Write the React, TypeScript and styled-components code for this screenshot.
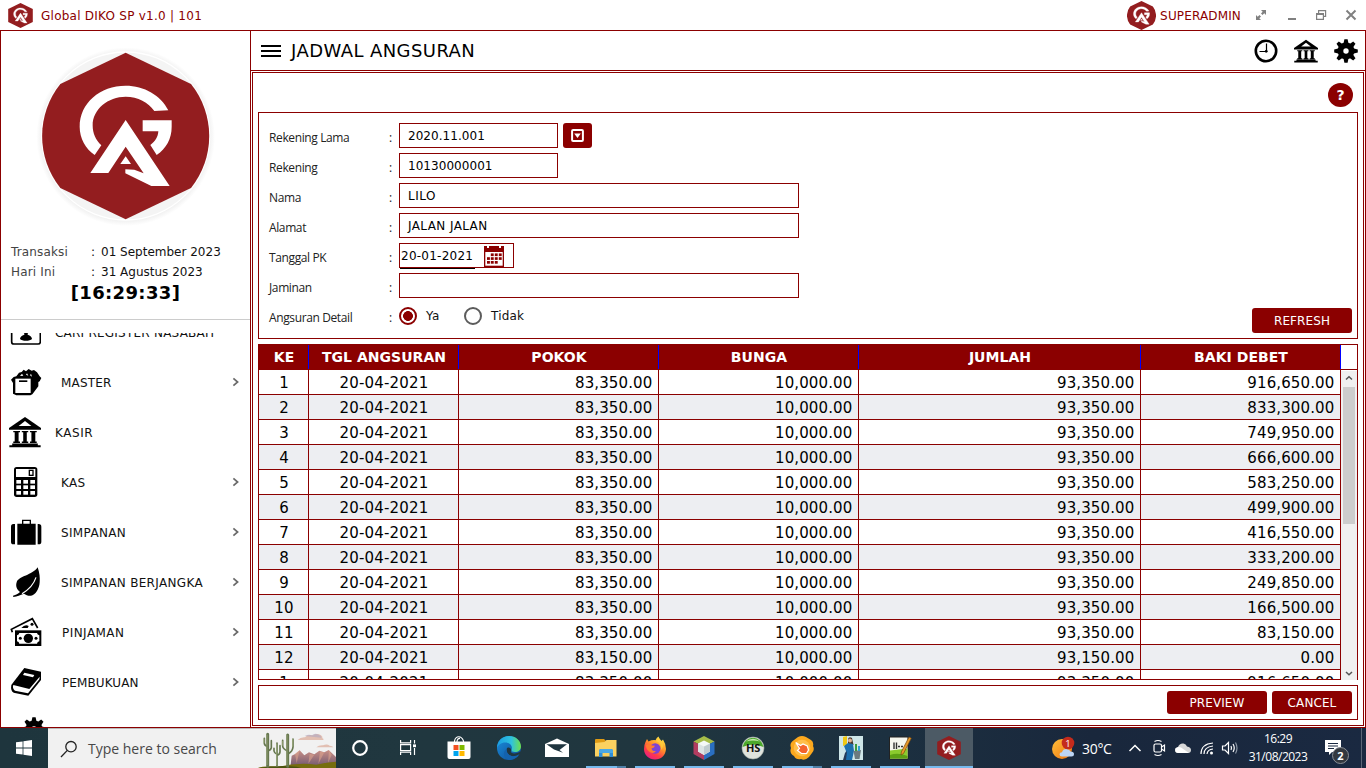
import React from "react";
import styled, { createGlobalStyle, css } from "styled-components";

const RED = "#8b0000";
const LOGO = "#931d1f";
const VERDANA = `Verdana, "DejaVu Sans", sans-serif`;
const SEGOE = `"Segoe UI", "Open Sans", "Noto Sans", sans-serif`;

const Global = createGlobalStyle`
  * { box-sizing: border-box; }
  body { margin: 0; background: #fff; overflow: hidden; font: 12px ${VERDANA}; color: #111; }
  svg { display: block; flex: none; }
`;

const Screen = styled.div`
  width: 1366px;
  height: 768px;
  display: flex;
  flex-direction: column;
`;

/* ---------- window ---------- */

const TitleBar = styled.header`
  height: 30px;
  flex: none;
  display: flex;
  align-items: center;
  padding: 0 9px 0 8px;
  color: ${RED};
`;
const AppName = styled.span`
  margin-left: 8px;
  padding-top: 2px;
  letter-spacing: 0.25px;
`;
const UserName = styled.span`
  margin: 0 14px 0 4px;
  padding-top: 2px;
  letter-spacing: 0.15px;
`;
const Grow = styled.div`
  flex: 1;
`;
const WindowButtons = styled.div`
  display: flex;
  gap: 18px;
  align-items: center;
`;
const Main = styled.div`
  height: 698px;
  flex: none;
  display: flex;
  border: 1px solid ${RED};
`;
const Sidebar = styled.aside`
  width: 250px;
  flex: none;
  border-right: 1px solid ${RED};
  display: flex;
  flex-direction: column;
`;
const LogoArea = styled.div`
  height: 211px;
  display: flex;
  justify-content: center;
  padding-top: 15px;
`;
const InfoRow = styled.div`
  display: grid;
  grid-template-columns: 80px 10px 1fr;
  height: 20px;
  line-height: 20px;
  padding-left: 10px;
  color: #111;
  span:first-child { color: #444; letter-spacing: 0.15px; }
`;
const Clock = styled.div`
  height: 37px;
  line-height: 21px;
  font-size: 18px;
  font-weight: bold;
  letter-spacing: 0.35px;
  text-align: center;
  color: #000;
`;
const Menu = styled.nav`
  margin-top: 13px;
  flex: 1;
  min-height: 0;
  overflow: hidden;
`;
const Divider = styled.div`
  height: 1px;
  background: #ccc;
`;
const MenuItem = styled.div<{ $half?: boolean; $indent: number }>`
  height: 50px;
  display: flex;
  align-items: center;
  padding: 0 9px 0 8px;
  ${(p) => p.$half && css`margin-top: -26px;`}
  svg:first-child { margin-right: ${(p) => p.$indent}px; }
`;
const MenuLabel = styled.span<{ $track?: number }>`
  flex: 1;
  padding-top: 2px;
  white-space: nowrap;
  letter-spacing: ${(p) => p.$track ?? 0.2}px;
`;
const Content = styled.div`
  flex: 1;
  display: flex;
  flex-direction: column;
`;
const PageHeader = styled.div`
  height: 40px;
  flex: none;
  border-bottom: 1px solid ${RED};
  display: flex;
  align-items: center;
  padding: 1px 7.5px 0 10px;
  gap: 16px;
`;
const Burger = styled.div`
  width: 20px;
  height: 12px;
  margin-bottom: 1px;
  border-top: 2px solid #000;
  border-bottom: 2px solid #000;
  display: flex;
  align-items: center;
  &::after { content: ""; height: 2px; width: 20px; background: #000; }
`;
const PageTitle = styled.h1`
  margin: 0 0 1px -6px;
  font-size: 18px;
  font-weight: normal;
  letter-spacing: 0.42px;
  color: #000;
`;
const Panel = styled.div`
  flex: 1;
  margin: 1px;
  border: 1px solid ${RED};
  padding: 0 5px 5px;
  display: flex;
  flex-direction: column;
`;
const HelpRow = styled.div`
  height: 39px;
  flex: none;
  display: flex;
  justify-content: flex-end;
  padding: 10px 5px 0 0;
`;
const Help = styled.div`
  width: 25px;
  height: 24px;
  border-radius: 50%;
  background: ${RED};
  color: #fff;
  font: bold 14px/24px "DejaVu Sans", sans-serif;
  text-align: center;
`;

/* ---------- form ---------- */

const Form = styled.section`
  height: 227px;
  flex: none;
  border: 1px solid ${RED};
  padding: 10px 5px 0 10px;
  display: flex;
  justify-content: space-between;
`;
const Fields = styled.div`
  display: flex;
  flex-direction: column;
  gap: 5px;
`;
const Field = styled.div`
  height: 25px;
  display: flex;
  align-items: center;
`;
const Label = styled.label`
  width: 120px;
  padding-top: 3px;
  font: 12px ${SEGOE};
  letter-spacing: -0.38px;
  color: #222;
`;
const Colon = styled.span`
  width: 10px;
  padding-top: 3px;
  font: 12px ${SEGOE};
  color: #222;
`;
const Input = styled.div<{ $w: number; $date?: boolean; $track?: number }>`
  width: ${(p) => p.$w}px;
  height: 25px;
  border: 1px solid ${RED};
  padding: 0 9px 0 ${(p) => (p.$date ? 1 : 8)}px;
  display: flex;
  align-items: center;
  justify-content: space-between;
  letter-spacing: ${(p) => p.$track ?? 0.05}px;
  color: #000;
  position: relative;
  ${(p) => p.$date && css`
    letter-spacing: 0.25px;
    &::after {
      content: "";
      position: absolute;
      left: 0;
      bottom: -2px;
      width: 75px;
      height: 1px;
      background: #000;
    }
  `}
`;
const Button = styled.button<{ $w: number; $h: number }>`
  width: ${(p) => p.$w}px;
  height: ${(p) => p.$h}px;
  padding: 0;
  border: 0;
  border-radius: 3px;
  background: ${RED};
  color: #fff;
  font: 12px ${VERDANA};
  letter-spacing: 0.1px;
  display: flex;
  align-items: center;
  justify-content: center;
`;
const PickButton = styled(Button)`
  margin-left: 5px;
`;
const RefreshButton = styled(Button)`
  align-self: flex-end;
  margin-bottom: 5px;
`;
const Radio = styled.span<{ $on?: boolean }>`
  width: 18px;
  height: 18px;
  border-radius: 50%;
  border: 2px solid ${(p) => (p.$on ? RED : "#5c5c5c")};
  background: ${(p) => (p.$on ? `radial-gradient(circle, ${RED} 4.6px, #fff 5.2px)` : "#fff")};
`;
const RadioText = styled.span<{ $w: number }>`
  width: ${(p) => p.$w}px;
  padding-left: 9px;
  letter-spacing: 0.2px;
`;

/* ---------- table ---------- */

const COLS = "50px 150px 200px 200px 282px 200px";

const Table = styled.section`
  height: 336px;
  margin-top: 5px;
  flex: none;
  border: 1px solid ${RED};
  border-bottom: 0;
  display: flex;
  flex-direction: column;
`;
const HeadRow = styled.div`
  height: 25px;
  flex: none;
  display: grid;
  grid-template-columns: ${COLS};
  border-bottom: 1px solid ${RED};
`;
const HeadCell = styled.div`
  background: ${RED};
  border-right: 1px solid #00f;
  padding-left: 1px;
  color: #fff;
  font-size: 14px;
  font-weight: bold;
  line-height: 24px;
  letter-spacing: 0.04px;
  text-align: center;
`;
const Body = styled.div`
  flex: 1;
  min-height: 0;
  display: flex;
`;
const Rows = styled.div`
  width: 1082px;
  border-bottom: 1px solid ${RED};
  overflow: hidden;
`;
const Row = styled.div<{ $alt: boolean }>`
  display: grid;
  grid-template-columns: ${COLS};
  height: 25px;
  border-bottom: 1px solid ${RED};
  background: ${(p) => (p.$alt ? "#edeef2" : "#fff")};
`;
const Cell = styled.div<{ $num?: boolean }>`
  height: 24px;
  border-right: 1px solid ${RED};
  padding-top: 1px;
  padding-left: 1px;
  font-size: 15px;
  line-height: 25px;
  color: #000;
  text-align: ${(p) => (p.$num ? "right" : "center")};
  padding-right: ${(p) => (p.$num ? 5.6 : 0)}px;
  letter-spacing: ${(p) => (p.$num ? 0.12 : 0.17)}px;
`;
const Scrollbar = styled.div`
  flex: 1;
  margin-top: 1px;
  background: #f0f0f0;
  display: flex;
  flex-direction: column;
  align-items: center;
  padding: 4px 0 3px;
`;
const Thumb = styled.div`
  width: 12px;
  height: 137px;
  margin-top: 6px;
  background: #cdcdcd;
`;
const Footer = styled.section`
  height: 35px;
  margin-top: 5px;
  flex: none;
  border: 1px solid ${RED};
  display: flex;
  justify-content: flex-end;
  gap: 5px;
  padding: 5px 5px 0 0;
`;

/* ---------- task bar ---------- */

const Taskbar = styled.footer`
  height: 40px;
  flex: none;
  display: flex;
  color: #fff;
  font-family: ${SEGOE};
  background: linear-gradient(90deg, #1e353d 0, #20373f 30%, #20363f 48%, #1c3040 65%, #19273c 80%, #1a2941 100%);
`;
const Slot = styled.div<{ $w: number }>`
  width: ${(p) => p.$w}px;
  flex: none;
  display: flex;
  align-items: center;
  justify-content: center;
`;
const Search = styled.div`
  width: 288px;
  flex: none;
  background: #f1f1f1;
  border-top: 1px solid #b9b9b9;
  display: flex;
  align-items: center;
  padding-left: 12px;
  color: #484848;
  font-size: 14px;
  svg:first-child { margin-right: 10px; }
  span { flex: 1; }
`;
const TaskButton = styled.div<{ $state?: "run" | "multi" | "active"; $w?: number }>`
  width: ${(p) => p.$w ?? 49}px;
  flex: none;
  display: flex;
  flex-direction: column;
  align-items: center;
  padding-top: 8px;
  justify-content: space-between;
  margin-left: ${(p) => (p.$state === "active" ? 1 : 0)}px;
  background: ${(p) => (p.$state === "active" ? "#4c5a65" : "transparent")};
  &::after {
    content: "";
    width: ${(p) => (p.$state === "active" ? 48 : 40)}px;
    height: 2px;
    background: ${(p) =>
      !p.$state
        ? "transparent"
        : p.$state === "multi"
        ? "linear-gradient(90deg, #76b9ed 31px, #4f7fa6 31px)"
        : "#76b9ed"};
  }
`;
const Temp = styled.div`
  width: 47px;
  font-size: 14px;
  align-self: center;
  letter-spacing: -0.3px;
  padding-left: 6px;
`;
const DateTime = styled.div`
  width: 73px;
  text-align: center;
  font-size: 12px;
  line-height: 18px;
  padding: 2px 0 0 1px;
  letter-spacing: -0.5px;
  white-space: nowrap;
`;
const Notice = styled.div`
  width: 41px;
  margin-right: 6px;
  padding: 12px 0 0 11px;
  position: relative;
`;
const Badge = styled.span`
  position: absolute;
  left: 18px;
  top: 19px;
  width: 17px;
  height: 17px;
  border-radius: 50%;
  border: 1px solid #8a8f96;
  background: #33383f;
  font: bold 11px/15px ${SEGOE};
  text-align: center;
`;
const DesktopEdge = styled.div`
  width: 5px;
  border-left: 1px solid #5b6677;
`;

/* ---------- drawings ---------- */

const Mark = ({ weight = 0 }: { weight?: number }) => (
  <g fill="#fff" stroke="#fff" strokeWidth={weight}>
    <path d="M504 331C482 286 431 257 376 257C299 257 238 309 238 380C238 415 256 446 283 465L303 436C286 420 277 400 277 376C277 328 323 290 376 290C413 290 444 307 462 333Z" />
    <path d="M427 361H514V380C514 416 498 445 469 465L450 435C465 424 473 411 474 394H427Z" />
    <path d="M376 360L508 558H453L375 520V508L402 509L430 520L376 440L324 519H270Z" />
    <path d="M376 469L392 492H360Z" />
  </g>
);
const HEX = "M376 158L572 252A250 250 0 0 1 572 564L376 658L180 564A250 250 0 0 1 180 252Z";

const BigLogo = () => (
  <svg width="180" height="180" viewBox="107 138 540 540">
    <defs>
      <radialGradient id="halo">
        <stop offset=".9" stopColor="#e9e9e9" />
        <stop offset=".96" stopColor="#f6f6f6" />
        <stop offset="1" stopColor="#fff" />
      </radialGradient>
    </defs>
    <circle cx="376" cy="410" r="268" fill="url(#halo)" />
    <circle cx="376" cy="408" r="252" fill="#f4f4f4" stroke="#fff" strokeWidth="4" />
    <path d={HEX} fill={LOGO} />
    <Mark />
  </svg>
);
const SmallLogo = ({ size, round }: { size: number; round?: boolean }) => (
  <svg width={size} height={size} viewBox="126 158 500 500">
    <path d={round ? HEX : "M376 158L622 280V536L376 658L130 536V280Z"} fill={LOGO} />
    <Mark weight={6} />
  </svg>
);

const Bank = ({ size }: { size: number }) => (
  <svg width={size} height={size} viewBox="0 0 90 90">
    <path d="M45 3L90 34V39H0V34Z" />
    <path d="M45 14L63 28H27Z" fill="#fff" />
    <path d="M12 42h19v4h-4v26h4v4H12v-4h4V46h-4ZM36 42h18v4h-4v26h4v4H36v-4h4V46h-4ZM59 42h19v4h-4v26h4v4H59v-4h4V46h-4ZM9 77h72v5h8v6H1v-6h8Z" />
  </svg>
);
const Gear = ({ size }: { size: number }) => (
  <svg width={size} height={size} viewBox="-12 -12 24 24">
    {[0, 45, 90, 135].map((a) => (
      <path key={a} d="M-2.4 -8L-1.6 -11.8H1.6L2.4 -8V8L1.6 11.8H-1.6L-2.4 8Z" transform={`rotate(${a})`} />
    ))}
    <circle r="8.4" />
    <circle r="2.7" fill="#fff" />
  </svg>
);
const ClockIcon = () => (
  <svg width="24" height="24" viewBox="0 0 24 24" fill="none" stroke="#000">
    <circle cx="12" cy="12" r="10.2" strokeWidth="2.6" />
    <path d="M12.5 4.5V12.5H5.5" strokeWidth="1.2" />
    <circle cx="12.2" cy="12.3" r="1.4" fill="#000" stroke="none" />
  </svg>
);

const CardIcon = () => (
  <svg width="32" height="30" viewBox="0 3 96 90">
    <rect x="8" y="14" width="86" height="70" rx="7" fill="none" stroke="#000" strokeWidth="5" />
    <circle cx="51" cy="40" r="13" />
    <path d="M46 48h10v8c8 3 13 7 13 13c-6 7-30 7-36 0c0-6 5-10 13-13Z" />
  </svg>
);
const BoxIcon = () => (
  <svg width="34" height="30" viewBox="0 0 102 90">
    <path d="M6 38L14 30L22 28L30 17L38 15L44 8L51 13L59 6L68 11L75 9L84 16L92 28L97 33L92 43L88 45V58L70 82L64 85H22L12 80V48Z" />
    <rect x="19" y="35" width="46" height="43" fill="#fff" />
    <path d="M33 27L39 20L43 26ZM51 23L54 19L58 26ZM63 25L66 20L69 29Z" fill="#fff" />
    <path d="M30 40h25v5H30Z" />
  </svg>
);
const CalcIcon = () => (
  <svg width="34" height="32" viewBox="3 0 102 96">
    <rect x="18" y="3" width="70" height="90" rx="8" />
    <path d="M24 9h58v24H24Z" fill="#fff" />
    <rect x="64" y="13" width="11" height="15" fill="none" stroke="#000" strokeWidth="4" />
    {[42, 58, 75].map((y) =>
      [25, 46, 67].map((x) => <rect key={`${x}-${y}`} x={x} y={y} width="14" height="11" fill="#fff" />)
    )}
  </svg>
);
const CaseIcon = () => (
  <svg width="34" height="30" viewBox="0 0 102 90">
    <path d="M41 23V10H64V23" fill="none" stroke="#000" strokeWidth="4" />
    <path d="M13 21h5v61h-5q-7 0-7-8V29q0-8 7-8ZM25 20h55v63H25ZM86 21h3q8 0 8 8v45q0 8-8 8h-3Z" />
  </svg>
);
const LeafIcon = () => (
  <svg width="34" height="34" viewBox="0 0 102 102">
    <path d="M86 7C92 26 93 38 92 52C91 72 79 91 66 92C58 93 51 90 45 86C33 89 25 95 13 96L12 92C21 90 27 86 33 81C24 75 19 63 23 52C29 33 70 31 86 7Z" />
    <path d="M81 37C74 59 59 74 39 86" fill="none" stroke="#fff" strokeWidth="3.5" />
  </svg>
);
const CashIcon = () => (
  <svg width="34" height="32" viewBox="0 0 102 96">
    <path d="M10 49L7 40L70 8L86 36" fill="none" stroke="#000" strokeWidth="5" />
    <path d="M37 36Q48 24 59 30L56 36Z" />
    <circle cx="69" cy="25" r="4.5" />
    <path d="M18 43H97V90H18Z" />
    <path d="M31 51H84Q85 57 91 58V76Q85 77 84 83H31Q30 77 24 76V58Q30 57 31 51Z" fill="#fff" />
    <circle cx="58" cy="67" r="14" />
    <circle cx="34" cy="67" r="4.5" />
    <circle cx="81" cy="67" r="4.5" />
  </svg>
);
const BookIcon = () => (
  <svg width="34" height="32" viewBox="0 0 102 96">
    <path d="M46 6L96 17V42L58 89L14 80Q4 74 7 57L12 50Z" />
    <path d="M13 57L61 69L92 32L91 40L57 82L18 74Q9 67 13 57Z" fill="#fff" />
    <path d="M46 20L76 27L72 34L42 27Z" fill="#fff" />
  </svg>
);
const Chevron = () => (
  <svg width="10" height="12" viewBox="0 0 10 12" fill="none" stroke="#6a6a6a" strokeWidth="1.7">
    <path d="M2.4 2.4L6.6 6L2.4 9.6" />
  </svg>
);
const CalendarIcon = () => (
  <svg width="20" height="22" viewBox="0 0 20 22" fill={RED}>
    <path d="M0 1h3v2h2V1h10v2h2V1h3v21H0Z" />
    <path d="M1.3 7h17.4v13.7H1.3Z" fill="#fff" />
    {[8.4, 12.2, 16].map((y, r) =>
      [3, 6.8, 10.8, 14.8].map((x, c) =>
        (r === 0 && c === 0) || (r === 2 && c > 2) ? null : <rect key={`${x}-${y}`} x={x} y={y} width="2.9" height="2.7" />
      )
    )}
  </svg>
);
const DropIcon = () => (
  <svg width="13" height="13" viewBox="0 0 13 13">
    <rect x="1.1" y="1.1" width="10.8" height="10.8" rx="1" fill="none" stroke="#fff" strokeWidth="2" />
    <path d="M3.2 4.6H9.8L6.5 9Z" fill="#fff" />
  </svg>
);
const Arrow = ({ down }: { down?: boolean }) => (
  <svg width="8" height="6" viewBox="0 0 8 6" fill="none" stroke="#555" strokeWidth="1.5">
    <path d={down ? "M1 1L4 3.8L7 1" : "M1 4.5L4 1.8L7 4.5"} />
  </svg>
);

const Cactus = () => (
  <svg width="78" height="39" viewBox="0 0 234 117">
    <defs>
      <linearGradient id="hill" x2="0" y2="1">
        <stop stopColor="#c98f86" />
        <stop offset="1" stopColor="#69536e" />
      </linearGradient>
    </defs>
    <path d="M119 33q8-9 22-8q8-10 24-6q12-8 24 0q6 4 4 9q8 3 1 5H122ZM175 55q8-7 20-6q12-6 20 1q9 1 11 5H177Z" fill="#e2bfb2" />
    <path d="M140 21q12-7 22-2q8-8 20-2q8 3 8 9Z" fill="#b0a9c2" opacity=".6" />
    <path d="M98 107L101 80L113 74L125 64L139 79L153 70L169 76L184 65L199 70L212 63L234 84V117H98Z" fill="url(#hill)" />
    <path d="M125 64L116 103L111 74ZM169 77L151 104L155 74ZM199 70L181 105L186 68ZM213 64L210 103L221 77Z" fill="#e0a58e" opacity=".55" />
    <path d="M0 117Q15 110 62 113Q120 100 175 107Q209 100 234 98V117Z" fill="#766d0e" />
    <path d="M0 117Q60 108 116 113L129 117Z" fill="#4b520f" />
    <g fill="none" stroke="#66774f" strokeLinecap="round">
      <path d="M29 16V112M89 18V112" strokeWidth="9" />
      <path d="M19 28V43Q20 51 29 52M40 35V56Q39 63 30 65M57 42V112M48 58V66Q49 73 57 76M66 50V68Q66 76 57 79M74 34V51Q75 60 87 65M105 30V54Q104 67 91 74" strokeWidth="5" />
    </g>
    <g fill="none" stroke="#a8b383" strokeWidth="2">
      <path d="M27 17V108M87 18V108M56 44V108M73 36V50M104 30V53M18 29V42" />
    </g>
  </svg>
);

const StartIcon = () => (
  <svg width="16" height="16" viewBox="0 0 16 16" fill="#fff">
    <path d="M0 2.3L6.6 1.4V7.6H0ZM7.4 1.3L16 0V7.6H7.4ZM0 8.4H6.6V14.6L0 13.7ZM7.4 8.4H16V16L7.4 14.7Z" />
  </svg>
);
const SearchIcon = () => (
  <svg width="18" height="18" viewBox="0 0 18 18" fill="none" stroke="#222" strokeWidth="1.3">
    <circle cx="11" cy="6.7" r="5.2" />
    <path d="M7.3 10.4L1 17" />
  </svg>
);

const icon = { width: 24, height: 24, viewBox: "0 0 24 24" };

const Cortana = () => (
  <svg {...icon} fill="none" stroke="#fff" strokeWidth="2.2">
    <circle cx="12" cy="12" r="6.8" />
  </svg>
);
const TaskView = () => (
  <svg {...icon} fill="none" stroke="#fff" strokeWidth="1.2">
    <path d="M4.6 4V6.8H14.6V4M4.6 19V16.2H14.6V19M4.6 8.6H14.6V14.5H4.6ZM18.5 4V7.5M18.5 12V19" />
    <path d="M17 8.4H20V11.2H17Z" fill="#fff" stroke="none" />
  </svg>
);
const Store = () => (
  <svg {...icon}>
    <path d="M7.5 7V5Q8.5 .8 11.7 .8Q15 .8 16.5 5V7M10 6Q10 2.5 13 2.4" fill="none" stroke="#fff" strokeWidth="1.1" />
    <path d="M.5 5.5H23.5V21Q23.5 23 21.5 23H2.5Q.5 23 .5 21Z" fill="#fff" />
    <path d="M6.5 9h5v5h-5Z" fill="#f25022" />
    <path d="M12.5 9h5v5h-5Z" fill="#7fba00" />
    <path d="M6.5 15h5v5h-5Z" fill="#00a4ef" />
    <path d="M12.5 15h5v5h-5Z" fill="#ffb900" />
  </svg>
);
const Edge = () => (
  <svg {...icon}>
    <defs>
      <linearGradient id="e1"><stop stopColor="#1b9de2" /><stop offset=".6" stopColor="#2fc2df" /><stop offset="1" stopColor="#6de04c" /></linearGradient>
      <linearGradient id="e2" x2="1" y2="1"><stop stopColor="#1b8fdd" /><stop offset="1" stopColor="#0d4a94" /></linearGradient>
    </defs>
    <circle cx="12" cy="12" r="12" fill="url(#e2)" />
    <path d="M0 12C0 5 5 0 12 0C19 0 24 5 24 10.5C24 14 21.5 16 18 16C15 16 14 14.8 14.6 13.6C16 9 12 6.5 8.3 6.5C4 6.5 1 9 0 12Z" fill="url(#e1)" />
    <path d="M14.4 14.2C12.5 16.5 15.5 19 21.5 16.4L24 15.5V19L20 20C13.5 21.5 9 17.5 9.7 13C10.4 10.6 13.8 11.2 14.4 14.2Z" fill="#20363f" />
    <path d="M9.6 13C8.7 17.5 13 20.5 17 20.1C20 19.7 22 18.3 22.5 18C20.5 21.5 16.5 24 12.2 24C6 22 5.5 15.5 9.6 13Z" fill="#1462ad" />
  </svg>
);
const Mail = () => (
  <svg {...icon}>
    <path d="M0 8L12 2.5L24 8V21H0Z" fill="#fff" />
    <path d="M1.5 8.2H22L14.5 14L18 16.8L9 13.5Z" fill="#1f353f" />
  </svg>
);
const Folder = () => (
  <svg {...icon}>
    <path d="M1 4Q1 3 2 3H10L12 5H22V9H1Z" fill="#e09b14" />
    <path d="M1 7L10.5 6L12.5 4H22.5V20.5H1Z" fill="#fbd160" />
    <path d="M5 21V15Q5 13 7 13H17Q19 13 19 15V21H15.5V17H8.5V21Z" fill="#2f8ed8" />
    <path d="M5 17V15Q5 13 7 13H17Q19 13 19 15V17Z" fill="#4aa8e6" />
  </svg>
);
const Firefox = () => (
  <svg {...icon}>
    <defs>
      <linearGradient id="f1" x1=".8" y1="0" x2=".2" y2="1"><stop stopColor="#fff04a" /><stop offset=".4" stopColor="#ff9428" /><stop offset=".7" stopColor="#ff3b48" /><stop offset="1" stopColor="#e8188c" /></linearGradient>
    </defs>
    <path d="M2.5 6L4 3L5.5 5.5Q9 3.8 12.5 4.2Q13.5 1.5 15.5 .5Q16 3 18.5 5L20 3.5Q23.2 8.5 23 13C22.5 19.5 18 23.5 12 23.5C6 23.5 1 19 1 13Q1 9 2.5 6Z" fill="url(#f1)" />
    <circle cx="12.2" cy="12.5" r="5.2" fill="#7b43d6" />
    <path d="M3 9Q6 7.5 9 9.5L12 9.8Q11.5 12 8.5 12.5Q9 15.5 13 15Q10 18.5 6 15.5Q3 13 3 9Z" fill="#ff7b30" />
    <path d="M13 5Q19 7 18 14Q21 11 19.5 6.5L16 2Z" fill="#ffce3c" opacity=".8" />
  </svg>
);
const NetBeans = () => (
  <svg {...icon}>
    <path d="M12 0L22.5 5.5L12 11L1.5 5.5Z" fill="#a6bd49" />
    <path d="M1.5 5.5L12 11V24L1.5 18Z" fill="#b23c60" />
    <path d="M22.5 5.5L12 11V24L22.5 18Z" fill="#2a6fc1" />
    <path d="M12 4.5L18 7.5V15.5L12 19L6 15.5V7.5Z" fill="#f4f8f7" />
    <path d="M6 7.5L12 10.5V19L6 15.5Z" fill="#dce4e5" />
    <path d="M18 7.5L12 10.5V19L18 15.5Z" fill="#c0ccd0" />
  </svg>
);
const Heidi = () => (
  <svg {...icon}>
    <circle cx="12" cy="12" r="11" fill="#dfe3dd" stroke="#aab2aa" strokeWidth=".6" />
    <path d="M1.5 11A10.6 10.6 0 0 1 22.5 11Q12 6 1.5 11Z" fill="#4ba82b" />
    <path d="M5 5.5Q12 0 19 5.5Q12 3.5 5 5.5Z" fill="#c3e8ac" />
    <text x="12" y="16" textAnchor="middle" fontFamily="Open Sans, sans-serif" fontWeight="bold" fontSize="11" letterSpacing="-.3" fill="#111">HS</text>
  </svg>
);
const Hand = () => (
  <svg {...icon}>
    <path d="M8 1Q12 -1 16 1L21 4Q24 6 23 10Q25 14 22 17L19 21Q15 25 11 23Q6 24 4 20Q-1 17 1 12Q-1 7 4 4Z" fill="#fba81e" />
    <circle cx="12" cy="12" r="8.3" fill="#ffbf4a" />
    <path d="M5.8 6.5L10.5 9.5L13 8L17.3 10L18.5 14L16.5 17.5L11.5 17.5L7.5 14.5L9.5 12.5Z" fill="#f4632c" stroke="#fff" strokeWidth="1.2" />
  </svg>
);
const Cleaner = () => (
  <svg {...icon}>
    <path d="M0 0H24V24H0Z" fill="#cfe6e8" />
    <path d="M4 1L8 0V9L4 10Z" fill="#f0c814" />
    <path d="M9 3Q10 0 13 2L14.5 9L9 9Z" fill="#4a3428" />
    <circle cx="11" cy="4.5" r="2" fill="#e3b595" />
    <path d="M5 10L9 7L14 8L15 15L13 24H5L7 15Z" fill="#1d6fae" />
    <path d="M6 17L8 15L7 24H4Z" fill="#243a59" />
    <path d="M14.5 15L22 14L20.5 23H16Z" fill="#6c7b80" />
    <path d="M16 8L18 8V15H16Z" fill="#3e9a3c" />
    <path d="M19 10H21V15H19Z" fill="#2ea0cf" />
  </svg>
);
const Notepad = () => (
  <svg {...icon}>
    <path d="M1.5 1H20V23H1.5Z" fill="#f6f7ef" stroke="#222" strokeWidth="1" />
    <path d="M2 14.5L19.5 12.5V22.5H2Z" fill="#8bcb2d" />
    <path d="M2 19Q10 16 19.5 20V22.5H2Z" fill="#5da014" />
    <path d="M6 6.5V13M8.5 6.5V13" stroke="#333" strokeWidth="1.4" />
    <path d="M10 10.5H16" stroke="#333" strokeWidth="1.4" strokeDasharray="2 1" />
    <path d="M21 1L23.3 2.2L15.5 17.5L13 19L13.3 16Z" fill="#e79a29" stroke="#7b4b12" strokeWidth=".7" />
  </svg>
);
const Weather = () => (
  <svg width="24" height="24" viewBox="0 0 24 24">
    <defs><linearGradient id="sun" x2="1" y2="1"><stop stopColor="#ffc03b" /><stop offset="1" stopColor="#ef7411" /></linearGradient></defs>
    <circle cx="11" cy="13" r="10" fill="url(#sun)" />
    <path d="M11 20.5Q8.5 20.5 8.5 18.3Q8.5 16.3 11 16.2Q12 12.8 15.5 13Q18.5 13 19.5 15.5Q23 15.5 23 18Q23 20.5 20.5 20.5Z" fill="#bcd5f5" />
    <circle cx="17" cy="7" r="6.3" fill="#c42b1c" />
    <text x="17" y="10.5" textAnchor="middle" fontFamily="Open Sans, sans-serif" fontSize="9.5" fill="#fff">1</text>
  </svg>
);
const trayIcon = { width: 20, height: 20, viewBox: "0 0 20 20", fill: "none", stroke: "#fff", strokeWidth: 1.2 };

/* ---------- data ---------- */

const menu = [
  { label: "CARI REGISTER NASABAH", icon: <CardIcon />, indent: 14, track: 0.23, leaf: true },
  { label: "MASTER", icon: <BoxIcon />, indent: 18 },
  { label: "KASIR", icon: <Bank size={32} />, indent: 14, track: 0.55, leaf: true },
  { label: "KAS", icon: <CalcIcon />, indent: 18, track: 0.35 },
  { label: "SIMPANAN", icon: <CaseIcon />, indent: 18, track: 0.35 },
  { label: "SIMPANAN BERJANGKA", icon: <LeafIcon />, indent: 18, track: 0.33 },
  { label: "PINJAMAN", icon: <CashIcon />, indent: 19, track: 0.45 },
  { label: "PEMBUKUAN", icon: <BookIcon />, indent: 19, track: 0.1 },
];

const balances = [
  "916,650.00", "833,300.00", "749,950.00", "666,600.00", "583,250.00", "499,900.00", "416,550.00",
  "333,200.00", "249,850.00", "166,500.00", "83,150.00", "0.00", "916,650.00",
];
const rows = balances.map((bal, i) => {
  const last = i === 11;
  return {
    no: i === 12 ? 1 : i + 1,
    pokok: last ? "83,150.00" : "83,350.00",
    jumlah: last ? "93,150.00" : "93,350.00",
    bal,
  };
});

const GearItem = styled.div`
  height: 50px;
  padding: 10px 0 0 21px;
`;

const TextField = ({ label, value, w, track, children }: { label: string; value: string; w: number; track?: number; children?: React.ReactNode }) => (
  <Field>
    <Label>{label}</Label>
    <Colon>:</Colon>
    <Input $w={w} $track={track}>{value}</Input>
    {children}
  </Field>
);

export default function App() {
  return (
    <Screen>
      <Global />
      <TitleBar>
        <SmallLogo size={25} />
        <AppName>Global DIKO SP v1.0 | 101</AppName>
        <Grow />
        <SmallLogo size={29} round />
        <UserName>SUPERADMIN</UserName>
        <WindowButtons>
          <svg width="12" height="12" viewBox="0 0 12 12" fill="#808080">
            <path d="M6 1H11V6L9.3 4.3L7.5 6.1L6 4.6L7.7 2.8ZM1 6L2.7 7.7L4.5 5.9L6 7.4L4.3 9.2L6 11H1Z" />
          </svg>
          <svg width="12" height="12" viewBox="0 0 12 12"><path d="M3 9H11V11H3Z" fill="#808080" /></svg>
          <svg width="12" height="12" viewBox="0 0 12 12" fill="none" stroke="#808080" strokeWidth="1.2">
            <path d="M3.6 4V1.6H10.6V7.4H8.5M1.6 4.6H8.4V10.4H1.6ZM1.6 5.5H8.4" />
          </svg>
          <svg width="12" height="12" viewBox="0 0 12 12" stroke="#808080" strokeWidth="2"><path d="M1.5 1.5L10.5 10.5M10.5 1.5L1.5 10.5" /></svg>
        </WindowButtons>
      </TitleBar>

      <Main>
        <Sidebar>
          <LogoArea><BigLogo /></LogoArea>
          <InfoRow><span>Transaksi</span><span>:</span><span>01 September 2023</span></InfoRow>
          <InfoRow><span>Hari Ini</span><span>:</span><span>31 Agustus 2023</span></InfoRow>
          <Clock>[16:29:33]</Clock>
          <Divider />
          <Menu>
            {menu.map((m, i) => (
              <MenuItem key={m.label} $half={i === 0} $indent={m.indent}>
                {m.icon}
                <MenuLabel $track={m.track}>{m.label}</MenuLabel>
                {!m.leaf && <Chevron />}
              </MenuItem>
            ))}
            <GearItem><Gear size={24} /></GearItem>
          </Menu>
        </Sidebar>

        <Content>
          <PageHeader>
            <Burger />
            <PageTitle>JADWAL ANGSURAN</PageTitle>
            <Grow />
            <ClockIcon />
            <Bank size={24} />
            <Gear size={24} />
          </PageHeader>
          <Panel>
            <HelpRow><Help>?</Help></HelpRow>
            <Form>
              <Fields>
                <TextField label="Rekening Lama" value="2020.11.001" w={159}>
                  <PickButton $w={29} $h={25}><DropIcon /></PickButton>
                </TextField>
                <TextField label="Rekening" value="10130000001" w={159} />
                <TextField label="Nama" value="LILO" w={400} track={0.5} />
                <TextField label="Alamat" value="JALAN JALAN" w={400} track={0.4} />
                <Field>
                  <Label>Tanggal PK</Label>
                  <Colon>:</Colon>
                  <Input $w={115} $date>20-01-2021<CalendarIcon /></Input>
                </Field>
                <TextField label="Jaminan" value="" w={400} />
                <Field>
                  <Label>Angsuran Detail</Label>
                  <Colon>:</Colon>
                  <Radio $on />
                  <RadioText $w={47}>Ya</RadioText>
                  <Radio />
                  <RadioText $w={60}>Tidak</RadioText>
                </Field>
              </Fields>
              <RefreshButton $w={100} $h={25}>REFRESH</RefreshButton>
            </Form>

            <Table>
              <HeadRow>
                {["KE", "TGL ANGSURAN", "POKOK", "BUNGA", "JUMLAH", "BAKI DEBET"].map((h) => (
                  <HeadCell key={h}>{h}</HeadCell>
                ))}
              </HeadRow>
              <Body>
                <Rows>
                  {rows.map((r, i) => (
                    <Row key={i} $alt={i % 2 === 1}>
                      <Cell>{r.no}</Cell>
                      <Cell>20-04-2021</Cell>
                      <Cell $num>{r.pokok}</Cell>
                      <Cell $num>10,000.00</Cell>
                      <Cell $num>{r.jumlah}</Cell>
                      <Cell $num>{r.bal}</Cell>
                    </Row>
                  ))}
                </Rows>
                <Scrollbar>
                  <Arrow />
                  <Thumb />
                  <Grow />
                  <Arrow down />
                </Scrollbar>
              </Body>
            </Table>

            <Footer>
              <Button $w={100} $h={23}>PREVIEW</Button>
              <Button $w={80} $h={23}>CANCEL</Button>
            </Footer>
          </Panel>
        </Content>
      </Main>

      <Taskbar>
        <Slot $w={48}><StartIcon /></Slot>
        <Search>
          <SearchIcon />
          <span>Type here to search</span>
          <Cactus />
        </Search>
        <TaskButton $w={48}><Cortana /></TaskButton>
        <TaskButton $w={48}><TaskView /></TaskButton>
        <TaskButton $w={53}><Store /></TaskButton>
        <TaskButton $w={47}><Edge /></TaskButton>
        <TaskButton><Mail /></TaskButton>
        <TaskButton $w={50} $state="multi"><Folder /></TaskButton>
        <TaskButton $w={48} $state="run"><Firefox /></TaskButton>
        <TaskButton $state="run"><NetBeans /></TaskButton>
        <TaskButton $state="run"><Heidi /></TaskButton>
        <TaskButton $state="multi"><Hand /></TaskButton>
        <TaskButton $state="run"><Cleaner /></TaskButton>
        <TaskButton $state="run"><Notepad /></TaskButton>
        <TaskButton $w={48} $state="active"><SmallLogo size={24} /></TaskButton>
        <Grow />
        <Slot $w={26}><Weather /></Slot>
        <Temp>30°C</Temp>
        <Slot $w={24}>
          <svg {...trayIcon}><path d="M4.5 13L10 7.5L15.5 13" strokeWidth="1.5" /></svg>
        </Slot>
        <Slot $w={24}>
          <svg {...trayIcon}>
            <rect x="5" y="6" width="7.5" height="8" rx="1.5" />
            <path d="M12.5 9L15.5 7V13L12.5 11M5.5 3.5Q9 1.5 12.5 3.5M5.5 16.5Q9 18.5 12.5 16.5" />
          </svg>
        </Slot>
        <Slot $w={24}>
          <svg {...trayIcon} stroke="none">
            <path d="M5 15Q2 15 2 12Q2 9.5 5 9Q6.5 5 10.5 5.5Q13 6 14 8.5Q18 9 18 12Q18 15 15 15Z" fill="#d8d8d8" />
            <path d="M2.5 10.5Q5 8 8 9.5L16 15H5Q1.5 14.5 2.5 10.5Z" fill="#fff" />
          </svg>
        </Slot>
        <Slot $w={24}>
          <svg {...trayIcon}>
            <path d="M4 16Q4 6 16 5M7 16Q7 9 16 8M10 16Q10.5 11.5 16 11" />
            <circle cx="14.5" cy="15" r="1.5" fill="#fff" stroke="none" />
          </svg>
        </Slot>
        <Slot $w={22}>
          <svg {...trayIcon}>
            <path d="M2.5 8H5L8.5 4.5V15.5L5 12H2.5ZM11 8Q12 10 11 12M13 6Q15.5 10 13 14" />
            <path d="M15.5 4.5Q18.5 10 15.5 15.5" stroke="#8c97a5" />
          </svg>
        </Slot>
        <DateTime>16:29<br />31/08/2023</DateTime>
        <Notice>
          <svg width="17" height="16" viewBox="0 0 17 16">
            <path d="M0 0H16V12H7L4 15V12H0Z" fill="#fff" />
            <path d="M3 3.5H13M3 6H13M3 8.5H9" stroke="#1a2941" />
          </svg>
          <Badge>2</Badge>
        </Notice>
        <DesktopEdge />
      </Taskbar>
    </Screen>
  );
}
